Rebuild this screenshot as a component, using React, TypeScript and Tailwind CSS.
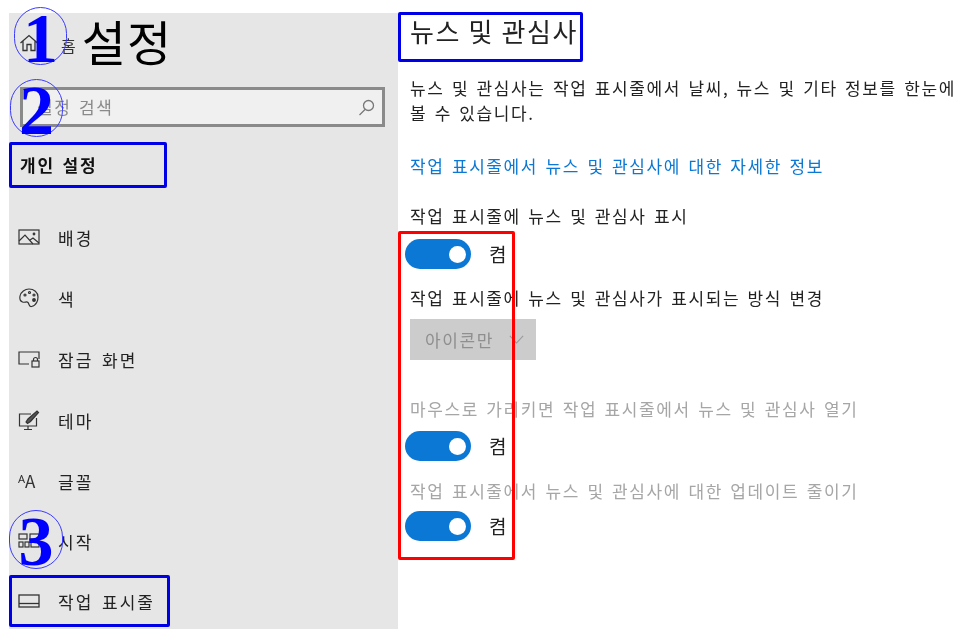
import React from 'react';

const IconHome = () => (
  <svg width="20" height="20" viewBox="0 0 20 20" fill="none" stroke="#333" strokeWidth="1.3">
    <path d="M1.5 10 10 2.5 18.5 10M4 8v9.5h4v-6h4v6h4V8" />
  </svg>
);
const IconPicture = () => (
  <svg width="22" height="18" viewBox="0 0 22 18" fill="none" stroke="#333" strokeWidth="1.2">
    <rect x="1" y="2" width="20" height="14" />
    <path d="M1 13 7 7l8 9M12 12l3-2 6 5" />
    <circle cx="16" cy="6" r="0.8" />
  </svg>
);
const IconPalette = () => (
  <svg width="22" height="22" viewBox="0 0 22 22" fill="none" stroke="#333" strokeWidth="1.2">
    <path d="M11 2c5 0 9 3.5 9 8 0 2.5-1 8.500-6.500 9.500-3 .5-2-2.500-3.500-4-1.500-1.500-3 .5-5.500-.5C2 14 1.500 11.500 2 9c.8-4 5-7 9-7Z" />
    <circle cx="7" cy="8" r="1" />
    <circle cx="11.500" cy="5.500" r="1" />
    <circle cx="16" cy="8" r="1" />
    <circle cx="16" cy="13" r="1.300" fill="#333" />
  </svg>
);
const IconLock = () => (
  <svg width="22" height="18" viewBox="0 0 22 18" fill="none" stroke="#333" strokeWidth="1.2">
    <path d="M11 14H1V2h20v7" />
    <rect x="14" y="11" width="7" height="6" />
    <path d="M15.500 11V9.500a2 2 0 0 1 4 0V11" />
  </svg>
);
const IconTheme = () => (
  <svg width="22" height="22" viewBox="0 0 22 22" fill="none" stroke="#333" strokeWidth="1.2">
    <path d="M13 5H1.500v12h17V9M10 17v3M6 20.500h8" />
    <path d="m8 13 2-3 9-8 1.500 1.500-8 9-3 2Z" fill="#555" />
  </svg>
);
const IconStart = () => (
  <svg width="22" height="18" viewBox="0 0 22 18" fill="none" stroke="#333" strokeWidth="1.2">
    <rect x="1" y="2" width="8" height="5" />
    <rect x="12" y="2" width="9" height="5" />
    <rect x="1" y="10" width="4" height="5" />
    <rect x="7" y="10" width="4" height="5" />
    <rect x="13" y="10" width="8" height="5" />
  </svg>
);
const IconTaskbar = () => (
  <svg width="22" height="14" viewBox="0 0 22 14" fill="none" stroke="#333" strokeWidth="1.3">
    <rect x="1" y="1" width="20" height="12" />
    <path d="M1 9.500h20" />
  </svg>
);
const IconSearch = () => (
  <svg width="17" height="17" viewBox="0 0 17 17" fill="none" stroke="#777" strokeWidth="1.3">
    <circle cx="10.500" cy="6.500" r="5" />
    <path d="M7 10.500 1.500 16" />
  </svg>
);

const NavRow = ({ icon, label, className }: { icon: React.ReactNode; label: string; className: string }) => (
  <div className={`flex items-center ${className}`}>
    <div className="flex w-[49px] shrink-0 justify-start pl-[9px]">{icon}</div>
    <span className="mt-[2px] text-[17px] tracking-[2px] [word-spacing:3px] text-[#222]">{label}</span>
  </div>
);

const Toggle = ({ className }: { className: string }) => (
  <div className={`flex items-center ${className}`}>
    <div className="flex h-[30px] w-[66px] items-center justify-end rounded-full bg-[#0a78d4] pr-[5px]">
      <div className="h-[17px] w-[17px] rounded-full bg-white" />
    </div>
    <span className="ml-[18px] text-[19px] text-[#222]">켬</span>
  </div>
);

const Circled = ({ n, className }: { n: string; className: string }) => (
  <div
    className={`absolute flex items-center justify-center rounded-full border border-[#3a3aff] pt-[5px] font-['Liberation_Serif',serif] text-[70px] leading-none font-bold text-[#0000ff] ${className}`}
  >
    {n}
  </div>
);

const Frame = ({ className }: { className: string }) => <div className={`absolute rounded-[2px] ${className}`} />;

const body = 'text-[17px] leading-[25px] tracking-[1.6px] [word-spacing:2px]';

export default function App() {
  return (
    <div className="relative h-[635px] w-[959px] overflow-hidden bg-white pt-[13px] pl-[9px] font-['Noto_Sans_CJK_KR','Noto_Sans',sans-serif] blur-[0.35px]">
      <div className="flex h-[616px]">
        <aside className="flex w-[389px] shrink-0 flex-col bg-[#e6e6e6]">
          <div className="flex h-[56px] items-center pt-[4px]">
            <div className="flex w-[52px] justify-start pl-[10px]">
              <IconHome />
            </div>
            <span className="mt-[4px] text-[16px] text-[#333]">홈</span>
            <span className="mt-[-6px] ml-[6px] text-[48px] leading-none tracking-[1px] text-black">설정</span>
          </div>
          <div className="mx-[11px] mt-[18px] flex h-[40px] w-[365px] items-center justify-between border-[3px] border-[#8a8a8a] bg-[#f0f0f0] pr-[7px] pl-[14px]">
            <span className="text-[17px] tracking-[1.6px] [word-spacing:2px] text-[#8a8a8a]">설정 검색</span>
            <IconSearch />
          </div>
          <div className="mt-[26px] flex h-[23px] items-center pl-[11px] text-[17px] tracking-[1.8px] [word-spacing:2px] font-bold text-[#111]">
            개인 설정
          </div>
          <NavRow icon={<IconPicture />} label="배경" className="mt-[49px] h-[23px]" />
          <NavRow icon={<IconPalette />} label="색" className="mt-[38px] h-[23px]" />
          <NavRow icon={<IconLock />} label="잠금 화면" className="mt-[38px] h-[23px]" />
          <NavRow icon={<IconTheme />} label="테마" className="mt-[38px] h-[23px]" />
          <NavRow
            icon={<span className="text-[17px] leading-none text-[#333]">ᴬA</span>}
            label="글꼴"
            className="mt-[38px] h-[23px]"
          />
          <NavRow icon={<IconStart />} label="시작" className="mt-[37px] h-[23px]" />
          <NavRow icon={<IconTaskbar />} label="작업 표시줄" className="mt-[37px] h-[23px]" />
        </aside>

        <main className="flex-1 pl-[12px]">
          <h1 className="mt-[-2px] flex h-[38px] items-center text-[26px] font-normal tracking-[1.6px] text-[#222]">
            뉴스 및 관심사
          </h1>
          <p className={`mt-[26px] w-[548px] text-[#222] ${body}`}>
            뉴스 및 관심사는 작업 표시줄에서 날씨, 뉴스 및 기타 정보를 한눈에 볼 수 있습니다.
          </p>
          <a className={`mt-[28px] block text-[#0a78d4] ${body}`}>작업 표시줄에서 뉴스 및 관심사에 대한 자세한 정보</a>
          <div className={`mt-[25px] text-[#222] ${body}`}>작업 표시줄에 뉴스 및 관심사 표시</div>
          <Toggle className="mt-[11px] ml-[-5px] h-[30px]" />
          <div className={`mt-[16px] text-[#222] ${body}`}>작업 표시줄에 뉴스 및 관심사가 표시되는 방식 변경</div>
          <div className="mt-[9px] flex h-[41px] w-[126px] items-center justify-between bg-[#cccccc] pr-[12px] pl-[15px]">
            <span className="text-[17px] tracking-[1.6px] text-[#8f8f8f]">아이콘만</span>
            <svg width="15" height="9" viewBox="0 0 17 10" fill="none" stroke="#9a9a9a" strokeWidth="1.3">
              <path d="m1 1 7.500 8L16 1" />
            </svg>
          </div>
          <div className={`mt-[36px] text-[#a6a6a6] ${body}`}>마우스로 가리키면 작업 표시줄에서 뉴스 및 관심사 열기</div>
          <Toggle className="mt-[10px] ml-[-5px] h-[30px]" />
          <div className={`mt-[17px] text-[#a6a6a6] ${body}`}>작업 표시줄에서 뉴스 및 관심사에 대한 업데이트 줄이기</div>
          <Toggle className="mt-[8px] ml-[-5px] h-[30px]" />
        </main>
      </div>

      {/* annotations drawn over the screenshot */}
      <Circled n="1" className="top-[7px] left-[14px] h-[58px] w-[53px]" />
      <Circled n="2" className="top-[79px] left-[10px] h-[58px] w-[53px]" />
      <Circled n="3" className="top-[510px] left-[9px] h-[59px] w-[54px]" />
      <Frame className="top-[142px] left-[9px] h-[46px] w-[158px] border-[3px] border-[#0000e6]" />
      <Frame className="top-[575px] left-[9px] h-[52px] w-[161px] border-[3px] border-[#0000e6]" />
      <Frame className="top-[12px] left-[398px] h-[50px] w-[185px] border-[3px] border-[#0000e6]" />
      <Frame className="top-[231px] left-[398px] h-[329px] w-[117px] border-[3px] border-[#ff0000]" />
    </div>
  );
}
